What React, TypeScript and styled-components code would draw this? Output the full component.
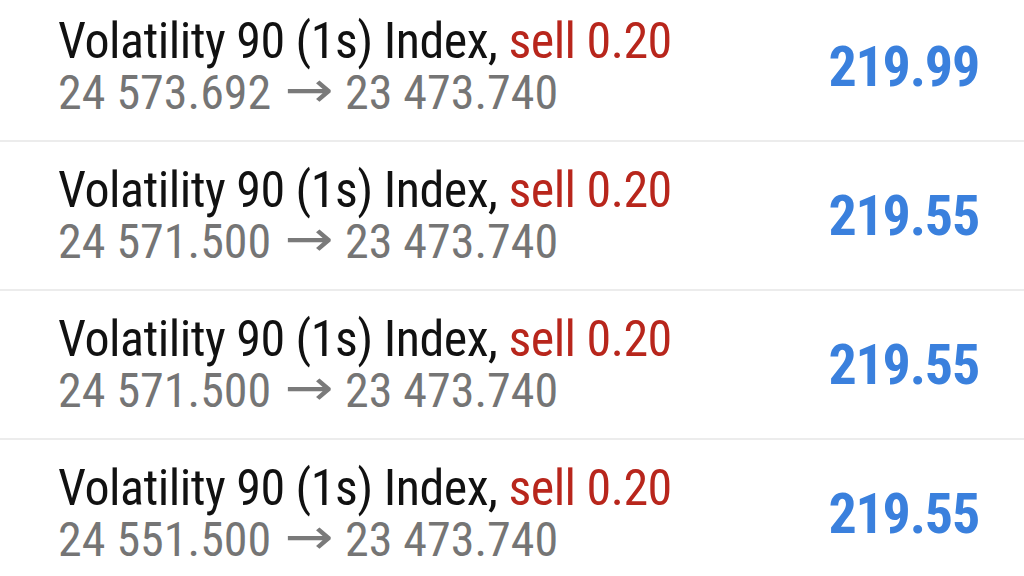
import React from 'react'
import styled, { createGlobalStyle } from 'styled-components'

const GlobalStyle = createGlobalStyle`
	html, body {
		margin: 0;
		padding: 0;
		background: #ffffff;
		overflow: hidden;
	}
	body {
		font-family: Roboto, "Noto Sans", sans-serif;
	}
`

interface Trade {
	open: string
	close: string
	profit: string
}

const trades: Trade[] = [
	{ open: '24 573.692', close: '23 473.740', profit: '219.99' },
	{ open: '24 571.500', close: '23 473.740', profit: '219.55' },
	{ open: '24 571.500', close: '23 473.740', profit: '219.55' },
	{ open: '24 551.500', close: '23 473.740', profit: '219.55' },
]

const App: React.FC = () => {
	return (
		<>
			<GlobalStyle />
			<StyledList>
				{trades.map((t, i) => (
					<StyledRow key={i}>
						<StyledInfo>
							<StyledTitle>
								Volatility 90 (1s) Index, <StyledSell>sell 0.20</StyledSell>
							</StyledTitle>
							<StyledPrices>
								{t.open}
								<StyledArrow>→</StyledArrow>
								{t.close}
							</StyledPrices>
						</StyledInfo>
						<StyledProfit>{t.profit}</StyledProfit>
					</StyledRow>
				))}
			</StyledList>
		</>
	)
}

const StyledList = styled.div`
	display: flex;
	flex-direction: column;
	margin-top: -7px;
`

const StyledRow = styled.div`
	display: flex;
	align-items: center;
	justify-content: space-between;
	height: 147px;
	padding: 0 45px 0 58px;
	border-bottom: 2px solid #ececec;
`

const StyledInfo = styled.div`
	display: flex;
	flex-direction: column;
`

const StyledTitle = styled.div`
	color: #111111;
	font-size: 50px;
	font-stretch: 75%;
	letter-spacing: -0.5px;
	line-height: 52px;
	white-space: nowrap;
`

const StyledSell = styled.span`
	color: #b8261c;
`

const StyledPrices = styled.div`
	color: #757575;
	font-size: 48px;
	font-stretch: 75%;
	line-height: 52px;
	white-space: nowrap;
`

const StyledArrow = styled.span`
	display: inline-block;
	font-family: "DejaVu Sans", sans-serif;
	font-size: 50px;
	line-height: 30px;
	margin: 0 17px 0 19px;
	vertical-align: 2px;
	transform: scaleX(1.3);
	color: #7a7a7a;
`

const StyledProfit = styled.div`
	color: #3a80dd;
	font-size: 56px;
	font-weight: 700;
	font-stretch: 75%;
	letter-spacing: -1.2px;
	white-space: nowrap;
`

export default App
